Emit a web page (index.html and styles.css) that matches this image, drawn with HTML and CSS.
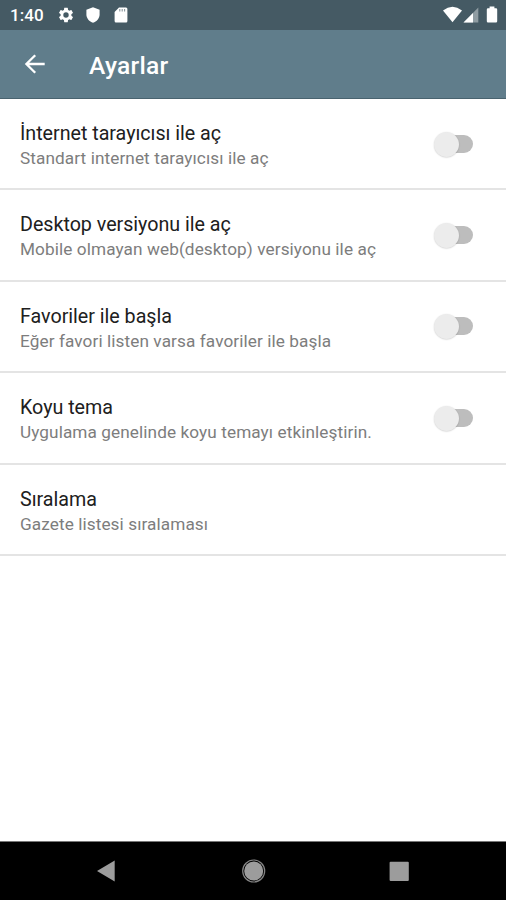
FILE: index.html
```html
<!DOCTYPE html>
<html lang="tr">
<head>
<meta charset="utf-8">
<title>Ayarlar</title>
<link rel="stylesheet" href="styles.css">
</head>
<body>
<div class="screen">
  <div class="status">
    <span class="clock">1:40</span>
    <svg class="gear" width="18" height="18" viewBox="0 0 24 24"><path fill="currentColor" d="M19.14 12.94c.04-.3.06-.61.06-.94s-.02-.64-.07-.94l2.03-1.58c.18-.14.23-.41.12-.61l-1.92-3.32c-.12-.22-.37-.29-.59-.22l-2.39.96c-.5-.38-1.03-.7-1.62-.94l-.36-2.54A.48.48 0 0 0 13.92 2.4h-3.84c-.24 0-.43.17-.47.41l-.36 2.54c-.59.24-1.13.57-1.62.94l-2.39-.96c-.22-.08-.47 0-.59.22L2.74 8.87c-.12.21-.08.47.12.61l2.03 1.58c-.05.3-.09.63-.09.94s.02.64.07.94l-2.03 1.58c-.18.14-.23.41-.12.61l1.92 3.32c.12.22.37.29.59.22l2.39-.96c.5.38 1.03.7 1.62.94l.36 2.54c.05.24.24.41.48.41h3.84c.24 0 .44-.17.47-.41l.36-2.54c.59-.24 1.13-.56 1.62-.94l2.39.96c.22.08.47 0 .59-.22l1.92-3.32c.12-.22.07-.47-.12-.61zM12 15.6A3.6 3.6 0 1 1 12 8.4a3.6 3.6 0 0 1 0 7.2z"/></svg>
    <svg class="shield" width="14" height="16" viewBox="0 0 14 16"><path fill="currentColor" d="M7 .3 13.6 2.8V7.5C13.6 11.4 10.6 14.6 7 15.7 3.4 14.6.4 11.4.4 7.5V2.8Z"/></svg>
    <svg class="card" width="14" height="16" viewBox="0 0 14 16"><path fill="currentColor" d="M5 .5H12Q13.4.5 13.4 2V14Q13.4 15.5 12 15.5H2Q.6 15.5.6 14V5Z"/><path class="pins" d="M5.8 2V4.6M8.2 2V4.6M10.6 2V4.6"/></svg>
    <svg class="system" width="56" height="18" viewBox="0 0 56 18"><path fill="currentColor" d="M0 4.5Q9.5-2.8 19 4.5L9.5 16.2Z"/><path fill="currentColor" opacity=".4" d="M20.5 16.5 35.3 1.5V16.5Z"/><path fill="currentColor" d="M20.5 16.5 30 7V16.5Z"/><path fill="currentColor" d="M46.6.6H51.4V2.2H53Q54.2 2.2 54.2 3.5V15.3Q54.2 16.5 53 16.5H45Q43.8 16.5 43.8 15.3V3.5Q43.8 2.2 45 2.2H46.6Z"/></svg>
  </div>
  <header class="appbar">
    <svg width="22" height="22" viewBox="0 0 22 22"><path fill="none" stroke="currentColor" stroke-width="2.3" d="M20.7 11H3M11.2 2.2 2.4 11 11.2 19.8"/></svg>
    <h1>Ayarlar</h1>
  </header>
  <main>
    <div class="row"><div><div class="title">İnternet tarayıcısı ile aç</div><div class="sub">Standart internet tarayıcısı ile aç</div></div><span class="switch"></span></div>
    <div class="row"><div><div class="title">Desktop versiyonu ile aç</div><div class="sub">Mobile olmayan web(desktop) versiyonu ile aç</div></div><span class="switch"></span></div>
    <div class="row"><div><div class="title">Favoriler ile başla</div><div class="sub">Eğer favori listen varsa favoriler ile başla</div></div><span class="switch"></span></div>
    <div class="row"><div><div class="title">Koyu tema</div><div class="sub">Uygulama genelinde koyu temayı etkinleştirin.</div></div><span class="switch"></span></div>
    <div class="row"><div><div class="title">Sıralama</div><div class="sub">Gazete listesi sıralaması</div></div></div>
  </main>
  <nav class="navbar">
    <svg width="506" height="58" viewBox="0 0 506 58"><path fill="#9c9c9c" d="M97 29 114.7 18.5V39.5Z"/><circle cx="253.7" cy="29" r="11" fill="none" stroke="#858585" stroke-width="1.2"/><circle cx="253.7" cy="29" r="9.5" fill="#9c9c9c"/><rect x="389.6" y="19.7" width="19.2" height="19.2" rx="1" fill="#9c9c9c"/></svg>
  </nav>
</div>
</body>
</html>
```
FILE: styles.css
```css
body {
  margin: 0;
  font-family: Roboto, sans-serif;
}
.screen {
  width: 506px;
  height: 900px;
  display: flex;
  flex-direction: column;
  background: #fff;
  overflow: hidden;
}
.status {
  height: 30px;
  box-sizing: border-box;
  padding: 0 7px 0 10px;
  display: flex;
  align-items: center;
  background: #455a64;
  color: #fff;
}
.clock {
  width: 47px;
  font-size: 17px;
  font-weight: 500;
  letter-spacing: 0.1px;
}
.shield { margin-left: 11px; }
.card { margin-left: 14px; }
.pins {
  stroke: #89969c;
  stroke-width: 1.1;
}
.system { margin-left: auto; }
.appbar {
  height: 69px;
  box-sizing: border-box;
  padding-left: 24px;
  border-bottom: 1px solid #49636f;
  display: flex;
  align-items: center;
  gap: 43px;
  background: #607d8b;
  color: #fff;
}
h1 {
  margin: 2px 0 0;
  font-size: 24.6px;
  font-weight: 500;
  letter-spacing: 0.25px;
}
main { flex: 1; }
.row {
  height: 91.4px;
  box-sizing: border-box;
  padding: 22px 33px 0 20px;
  border-bottom: 2px solid #e4e4e4;
  display: flex;
  justify-content: space-between;
}
.title {
  height: 25px;
  line-height: 26px;
  font-size: 19.7px;
  letter-spacing: -0.02px;
  color: #202020;
  white-space: nowrap;
}
.sub {
  height: 24px;
  line-height: 24px;
  font-size: 17.2px;
  letter-spacing: 0.09px;
  color: #7d7d7d;
  white-space: nowrap;
}
.switch {
  position: relative;
  width: 33px;
  height: 18px;
  margin-top: 13.5px;
  border-radius: 9px;
  background: #bdbdbd;
}
.switch::before {
  content: "";
  position: absolute;
  left: -6px;
  top: -3px;
  width: 25px;
  height: 25px;
  border-radius: 50%;
  background: #ececec;
  box-shadow: 0 0.5px 1.5px rgba(0, 0, 0, 0.2);
}
.navbar {
  height: 58px;
  border-top: 1px solid #777;
  background: #000;
}
.navbar svg { display: block; }
```
